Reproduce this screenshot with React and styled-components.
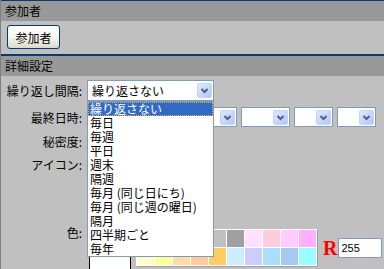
import React from "react";
import styled, { createGlobalStyle } from "styled-components";

const GlobalStyle = createGlobalStyle`
  html, body {
    margin: 0;
    padding: 0;
    background: #c0c0c0;
  }
  body {
    font-family: "Noto Sans CJK JP", "Noto Sans", sans-serif;
    font-size: 12px;
    color: #000;
  }
`;

const Page = styled.div`
  width: 384px;
  height: 269px;
  overflow: hidden;
  box-sizing: border-box;
  border-left: 1px solid #808080;
  background: #c0c0c0;
`;

const SectionHeader = styled.div`
  border-top: 1px solid #0b3a6b;
  background: #999999;
  height: 20px;
  line-height: 20px;
  padding-left: 4px;
`;

const SectionBody = styled.div`
  height: 33px;
  padding: 4px 6px 0;
  box-sizing: border-box;
  border-bottom: 1px solid #0b3a6b;
  height: 34px;
`;

const PushButton = styled.button`
  width: 53px;
  height: 24px;
  padding: 0;
  border: 1px solid #003c74;
  border-radius: 3px;
  background: linear-gradient(#ffffff, #f4f3ee 55%, #dcd8cc);
  font: inherit;
  color: #000;
`;

const Form = styled.div`
  padding-top: 4px;
`;

const Row = styled.div`
  display: grid;
  grid-template-columns: 81px 1fr;
  column-gap: 5px;
  align-items: ${(p) => (p.top ? "start" : "center")};
  height: ${(p) => p.h}px;
  margin-top: ${(p) => p.gap || 0}px;
`;

const Label = styled.div`
  text-align: right;
  white-space: nowrap;
  line-height: ${(p) => p.lh || 15}px;
`;

const Field = styled.div`
  position: relative;
  display: flex;
  align-items: ${(p) => (p.top ? "flex-start" : "center")};
  gap: 4px;
  height: 100%;
`;

const SelectBox = styled.div`
  box-sizing: border-box;
  width: ${(p) => p.w}px;
  height: ${(p) => p.h || 20}px;
  border: 1px solid #7f9db9;
  background: #fff;
  display: flex;
  align-items: center;
  justify-content: space-between;
  padding: 0 1px 0 4px;
  white-space: nowrap;
`;

const ArrowBtn = styled.span`
  box-sizing: border-box;
  width: 15px;
  height: 15px;
  flex: none;
  border: 1px solid #c4d4fb;
  border-radius: 2px;
  background: linear-gradient(135deg, #dfe8fe, #b3c7f6);
  display: flex;
  align-items: center;
  justify-content: center;
`;

const Arrow = () => (
  <ArrowBtn>
    <svg width="13" height="13" viewBox="0 0 13 13">
      <path d="M3.5 5 L6.5 8 L9.5 5" fill="none" stroke="#4d6185" strokeWidth="2" />
    </svg>
  </ArrowBtn>
);

const DropList = styled.ul`
  position: absolute;
  top: 21px;
  left: 0;
  z-index: 10;
  box-sizing: border-box;
  width: 127px;
  margin: 0;
  padding: 0;
  list-style: none;
  background: #fff;
  border: 1px solid #7f9db9;
`;

const DropItem = styled.li`
  height: 14px;
  line-height: 14px;
  padding-left: 2px;
  white-space: nowrap;
  background: ${(p) => (p.active ? "#316ac5" : "transparent")};
  color: ${(p) => (p.active ? "#fff" : "#000")};
  outline: ${(p) => (p.active ? "1px dotted #e8b048" : "none")};
  outline-offset: -1px;
`;

const Preview = styled.div`
  box-sizing: border-box;
  width: 42px;
  height: 22px;
  margin: 27px 0 0 2px;
  border: 1px solid #000;
  background: #fff;
  flex: none;
`;

const ColorGroup = styled.div`
  display: flex;
  align-items: center;
  margin-left: 1px;
`;

const Palette = styled.div`
  display: grid;
  grid-template-columns: repeat(10, 17px);
  grid-auto-rows: 17px;
  gap: 1px;
  padding: 1px;
  background: #fff;
  box-shadow: 1px 1px 0 #a0a0a0;
`;

const Swatch = styled.span`
  background: ${(p) => p.c};
`;

const RMark = styled.span`
  margin-left: 6px;
  font-family: "Liberation Serif", serif;
  font-weight: bold;
  font-size: 20px;
  color: #ff0000;
  line-height: 20px;
`;

const NumInput = styled.div`
  box-sizing: border-box;
  width: 44px;
  height: 20px;
  margin-left: 1px;
  border: 1px solid #7f9db9;
  background: #fff;
  padding-left: 2px;
  font-family: "Liberation Sans", Arial, sans-serif;
  font-size: 11px;
  line-height: 18px;
`;

const options = [
  "繰り返さない",
  "毎日",
  "毎週",
  "平日",
  "週末",
  "隔週",
  "毎月 (同じ日にち)",
  "毎月 (同じ週の曜日)",
  "隔月",
  "四半期ごと",
  "毎年",
];

const colors = [
  "#ffffff", "#f0f0f0", "#e0e0e0", "#d0d0d0", "#c0c0c0",
  "#a0a0a4", "#ffe0ff", "#ffccdd", "#ffccff", "#ffb0ff", "#ff80ff",
  "#ffffcc", "#ffff99", "#ffddaa", "#ffcc99", "#ffcc66",
  "#cceeff", "#ccccff", "#aaddff", "#a8c8f0", "#99ffff",
];

const App = () => (
  <>
    <GlobalStyle />
    <Page>
      <SectionHeader>参加者</SectionHeader>
      <SectionBody>
        <PushButton>参加者</PushButton>
      </SectionBody>
      <SectionHeader>詳細設定</SectionHeader>
      <Form>
        <Row h={21}>
          <Label>繰り返し間隔:</Label>
          <Field>
            <SelectBox w={127} h={21}>
              繰り返さない
              <Arrow />
            </SelectBox>
            <DropList>
              {options.map((o, i) => (
                <DropItem key={o} active={i === 0}>
                  {o}
                </DropItem>
              ))}
            </DropList>
          </Field>
        </Row>
        <Row h={20} gap={6}>
          <Label>最終日時:</Label>
          <Field>
            <SelectBox w={150}>
              <span />
              <Arrow />
            </SelectBox>
            <SelectBox w={49}>
              <span />
              <Arrow />
            </SelectBox>
            <SelectBox w={39}>
              <span />
              <Arrow />
            </SelectBox>
            <SelectBox w={39}>
              <span />
              <Arrow />
            </SelectBox>
          </Field>
        </Row>
        <Row h={20} gap={4}>
          <Label>秘密度:</Label>
          <Field />
        </Row>
        <Row h={66} gap={4} top>
          <Label lh={20}>アイコン:</Label>
          <Field />
        </Row>
        <Row h={44} gap={4} top>
          <Label>色:</Label>
          <Field top>
            <Preview />
            <ColorGroup style={{ marginTop: 4 }}>
              <Palette>
                {colors.slice(0, 10).map((c, i) => (
                  <Swatch key={"a" + i} c={c} />
                ))}
                {colors.slice(11).map((c, i) => (
                  <Swatch key={"b" + i} c={c} />
                ))}
              </Palette>
              <RMark>R</RMark>
              <NumInput>255</NumInput>
            </ColorGroup>
          </Field>
        </Row>
      </Form>
    </Page>
  </>
);

export default App;
